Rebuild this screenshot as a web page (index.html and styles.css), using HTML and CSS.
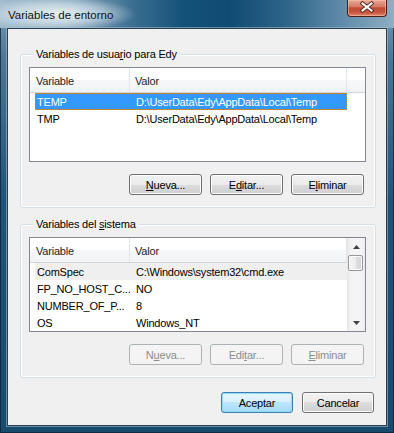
FILE: index.html
```html
<!DOCTYPE html>
<html lang="es">
<head>
    <meta charset="UTF-8">
    <meta name="viewport" content="width=device-width, initial-scale=1.0">
    <title>Variables de entorno</title>
    <link rel="stylesheet" href="styles.css">
</head>
<body>

<div class="window">
    <div class="titlebar">
        <span class="title">Variables de entorno</span>
        <div class="close-btn">
            <svg width="40" height="17" viewBox="0 0 40 17">
                <path d="M15.5 4.5 L24.5 11.5 M24.5 4.5 L15.5 11.5" stroke="#5a2a22" stroke-width="4" stroke-linecap="square"/>
                <path d="M15.5 4.5 L24.5 11.5 M24.5 4.5 L15.5 11.5" stroke="#ffffff" stroke-width="2" stroke-linecap="square"/>
            </svg>
        </div>
    </div>

    <div class="client">
        <!-- user variables -->
        <div class="group">
            <div class="group-caption">Variables de usua<u>r</u>io para Edy</div>
            <div class="list">
                <div class="list-main">
                    <div class="list-header">
                        <div class="hcol col-var">Variable</div>
                        <div class="hcol col-val">Valor</div>
                        <div class="hcol col-fill"></div>
                    </div>
                    <div class="row selected">
                        <span class="cell-var">TEMP</span>
                        <span class="cell-val">D:\UserData\Edy\AppData\Local\Temp</span>
                    </div>
                    <div class="row">
                        <span class="cell-var">TMP</span>
                        <span class="cell-val">D:\UserData\Edy\AppData\Local\Temp</span>
                    </div>
                </div>
            </div>
            <div class="button-row">
                <button class="btn"><u>N</u>ueva...</button>
                <button class="btn">E<u>d</u>itar...</button>
                <button class="btn">E<u>l</u>iminar</button>
            </div>
        </div>

        <!-- system variables -->
        <div class="group">
            <div class="group-caption">Variables del <u>s</u>istema</div>
            <div class="list">
                <div class="list-main">
                    <div class="list-header">
                        <div class="hcol col-var">Variable</div>
                        <div class="hcol col-val">Valor</div>
                    </div>
                    <div class="row inactive">
                        <span class="cell-var">ComSpec</span>
                        <span class="cell-val">C:\Windows\system32\cmd.exe</span>
                    </div>
                    <div class="row">
                        <span class="cell-var">FP_NO_HOST_C...</span>
                        <span class="cell-val">NO</span>
                    </div>
                    <div class="row">
                        <span class="cell-var">NUMBER_OF_P...</span>
                        <span class="cell-val">8</span>
                    </div>
                    <div class="row">
                        <span class="cell-var">OS</span>
                        <span class="cell-val">Windows_NT</span>
                    </div>
                </div>
                <div class="scrollbar">
                    <div class="sb-btn">
                        <svg width="7" height="4" viewBox="0 0 7 4"><path d="M0 4 L3.5 0 L7 4 Z" fill="#404040"/></svg>
                    </div>
                    <div class="sb-thumb"></div>
                    <div class="sb-track"></div>
                    <div class="sb-btn">
                        <svg width="7" height="4" viewBox="0 0 7 4"><path d="M0 0 L3.5 4 L7 0 Z" fill="#404040"/></svg>
                    </div>
                </div>
            </div>
            <div class="button-row">
                <button class="btn" disabled>N<u>u</u>eva...</button>
                <button class="btn" disabled>Edi<u>t</u>ar...</button>
                <button class="btn" disabled><u>E</u>liminar</button>
            </div>
        </div>

        <div class="dialog-buttons">
            <button class="btn btn-default">Aceptar</button>
            <button class="btn">Cancelar</button>
        </div>
    </div>
</div>

</body>
</html>
```

FILE: styles.css
```css
body {
    margin: 0;
    font-family: "Liberation Sans", Arial, sans-serif;
    font-size: 11px;
    letter-spacing: -0.2px;
    color: #000;
}
.window {
    width: 394px;
    height: 433px;
    box-sizing: border-box;
    display: flex;
    flex-direction: column;
    background: linear-gradient(to bottom, #7c9eb5 0, #4a7696 60px, #21537a 200px, #184a6e 100%);
    box-shadow: inset 0 0 0 1px rgba(10, 30, 50, 0.7);
}
.titlebar {
    height: 28px;
    display: flex;
    align-items: flex-start;
    background:
        radial-gradient(ellipse 78px 17px at 58px 14px, rgba(236, 243, 247, 0.95) 0%, rgba(226, 236, 242, 0.6) 55%, rgba(226, 236, 242, 0) 100%),
        linear-gradient(to right, #a2bccd 0%, #86a7bd 18%, #3b6e91 34%, #155279 46%, #0f4b73 58%, #2c6387 72%, #5d89a8 86%, #8eaec2 100%);
}
.title {
    flex: 1;
    margin: 8px 0 0 8px;
    line-height: 14px;
    font-size: 11.5px;
    letter-spacing: 0;
    color: #111;
}
.close-btn {
    width: 40px;
    height: 17px;
    margin-right: 7px;
    box-sizing: border-box;
    border: 1px solid #4f2019;
    border-top: none;
    border-radius: 0 0 4px 4px;
    background: linear-gradient(to bottom, #e8a895 0%, #d67c66 40%, #c24b33 50%, #c5533b 75%, #e3876c 100%);
    box-shadow: inset 0 0 0 1px rgba(255, 200, 180, 0.5);
}
.close-btn svg {
    display: block;
    margin: -1px 0 0 -1px;
}
.client {
    flex: 1;
    margin: 0 7px 7px 7px;
    padding: 25px 10px 12px 12px;
    border: 1px solid #2b3e50;
    background-color: #f0f0f0;
    box-shadow: 0 0 0 1px rgba(170, 196, 212, 0.55);
}

/* group boxes */
.group {
    border: 1px solid #d5dfe5;
    border-radius: 3px;
    box-shadow: inset 0 0 0 1px #fff;
    padding: 0 9px 12px 8px;
}
.group + .group {
    margin-top: 16px;
}
.group-caption {
    width: fit-content;
    margin: -7px 0 0 4px;
    padding: 0 3px;
    line-height: 13px;
    background-color: #f0f0f0;
}

/* list views */
.list {
    margin-top: 6px;
    height: 95px;
    box-sizing: border-box;
    border: 1px solid #828790;
    background-color: #fff;
    display: flex;
    overflow: hidden;
}
.list-main {
    flex: 1;
    min-width: 0;
}
.list-header {
    display: flex;
    height: 25px;
    box-sizing: border-box;
    border-bottom: 1px solid #d5d5d5;
    background: linear-gradient(to bottom, #fff 0, #fff 50%, #f7f8f9 50%, #f2f3f5 100%);
    color: #1e1e1e;
}
.hcol {
    box-sizing: border-box;
    display: flex;
    align-items: center;
    padding: 2px 0 0 6px;
    border-right: 1px solid #e3e7ec;
    white-space: nowrap;
}
.col-var {
    width: 100px;
}
.col-val {
    width: 217px;
    padding-left: 5px;
}
.col-fill {
    flex: 1;
    border-right: none;
}
.row {
    display: flex;
    align-items: center;
    height: 17px;
    width: 312px;
    margin-left: 5px;
    box-sizing: border-box;
    border: 1px solid transparent;
    white-space: nowrap;
}
.cell-var {
    width: 94px;
    padding-left: 1px;
    box-sizing: border-box;
    overflow: hidden;
}
.cell-val {
    padding-left: 6px;
}
.row.selected {
    background-color: #3399ff;
    border: 1px dotted #d08a3c;
    color: #fff;
}
.row.inactive {
    background-color: #efefef;
}

/* scroll bar */
.scrollbar {
    width: 18px;
    display: flex;
    flex-direction: column;
    background: linear-gradient(to right, #e6e6e6 0, #f3f3f3 20%, #f4f4f4 80%, #ececec 100%);
}
.sb-btn {
    height: 17px;
    display: flex;
    align-items: center;
    justify-content: center;
}
.sb-btn svg {
    display: block;
}
.sb-thumb {
    height: 16px;
    margin: 0 2px 0 1px;
    box-sizing: border-box;
    border: 1px solid #979797;
    border-radius: 2px;
    background: linear-gradient(to right, #f5f5f5 0, #ececec 50%, #dedede 50%, #d6d6d6 100%);
    box-shadow: inset 0 0 0 1px #fbfbfb;
}
.sb-track {
    flex: 1;
}

/* buttons */
.button-row {
    display: flex;
    justify-content: flex-end;
    gap: 8px;
    margin: 12px 2px 0 0;
}
.btn {
    width: 73px;
    height: 21px;
    padding: 0;
    box-sizing: border-box;
    border: 1px solid #707070;
    border-radius: 3px;
    background: linear-gradient(to bottom, #f2f2f2 0, #ebebeb 50%, #dddddd 50%, #cfcfcf 100%);
    box-shadow: inset 0 0 0 1px #fcfcfc;
    font-family: inherit;
    font-size: 11px;
    letter-spacing: -0.2px;
    color: #000;
    text-align: center;
}
.btn:disabled {
    border-color: #adb2b5;
    background: #f4f4f4;
    box-shadow: none;
    color: #8d8d8d;
}
.dialog-buttons {
    display: flex;
    justify-content: flex-end;
    gap: 9px;
    margin: 14px 2px 0 0;
}
.dialog-buttons .btn {
    width: 72px;
}
.btn-default {
    border-color: #3c7fb1;
    background: linear-gradient(to bottom, #e8f6fd 0, #d7effc 50%, #bde6fd 50%, #a6d9f4 100%);
    box-shadow: inset 0 0 0 1px #8fdcf7;
}
```
